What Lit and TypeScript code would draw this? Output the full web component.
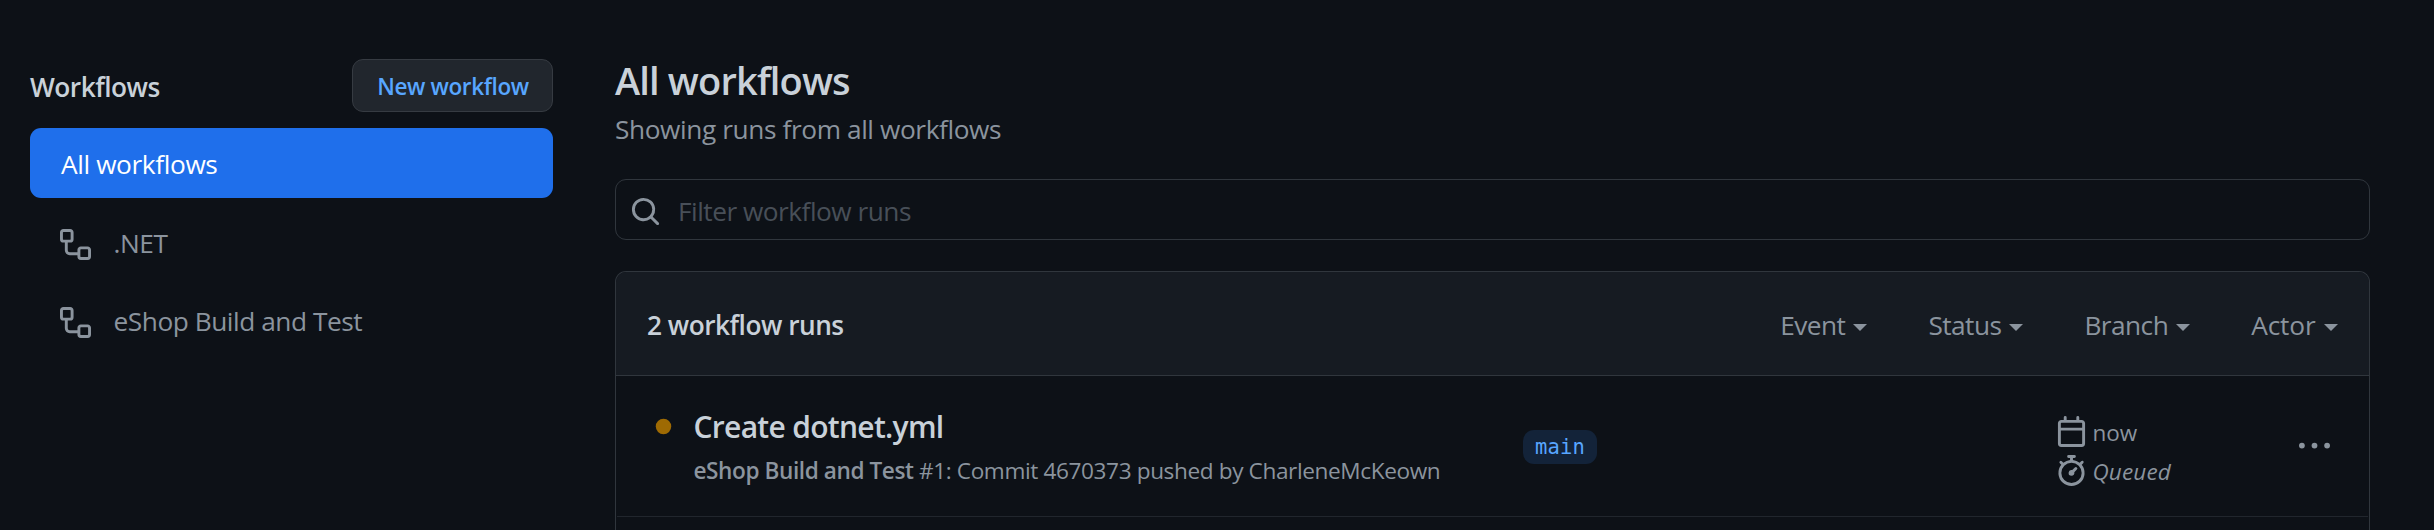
import { LitElement, html, css, svg } from "lit";
import { customElement, property } from "lit/decorators.js";

const icons: Record<string, string> = {
  workflow:
    "M0 1.75C0 .784.784 0 1.75 0h3.5C6.216 0 7 .784 7 1.75v3.5A1.75 1.75 0 0 1 5.25 7H4v4a1 1 0 0 0 1 1h4v-1.25C9 9.784 9.784 9 10.75 9h3.5c.966 0 1.75.784 1.75 1.75v3.5A1.75 1.75 0 0 1 14.25 16h-3.5A1.75 1.75 0 0 1 9 14.25v-.75H5A2.5 2.5 0 0 1 2.5 11V7h-.75A1.75 1.75 0 0 1 0 5.25Zm1.75-.25a.25.25 0 0 0-.25.25v3.5c0 .138.112.25.25.25h3.5a.25.25 0 0 0 .25-.25v-3.5a.25.25 0 0 0-.25-.25Zm9 9a.25.25 0 0 0-.25.25v3.5c0 .138.112.25.25.25h3.5a.25.25 0 0 0 .25-.25v-3.5a.25.25 0 0 0-.25-.25Z",
  search:
    "M10.68 11.74a6 6 0 0 1-7.922-8.982 6 6 0 0 1 8.982 7.922l3.04 3.04a.749.749 0 0 1-.326 1.275.749.749 0 0 1-.734-.215ZM11.5 7a4.499 4.499 0 1 0-8.997 0A4.499 4.499 0 0 0 11.5 7Z",
  calendar:
    "M4.75 0a.75.75 0 0 1 .75.75V2h5V.75a.75.75 0 0 1 1.5 0V2h1.25c.966 0 1.75.784 1.75 1.75v10.5A1.75 1.75 0 0 1 13.25 16H2.75A1.75 1.75 0 0 1 1 14.25V3.75C1 2.784 1.784 2 2.75 2H4V.75A.75.75 0 0 1 4.75 0ZM2.5 7.5v6.75c0 .138.112.25.25.25h10.5a.25.25 0 0 0 .25-.25V7.5Zm10.75-4H2.75a.25.25 0 0 0-.25.25V6h11V3.75a.25.25 0 0 0-.25-.25Z",
  stopwatch:
    "M5.75.75A.75.75 0 0 1 6.5 0h3a.75.75 0 0 1 0 1.5h-.75v1l-.001.041a6.724 6.724 0 0 1 3.464 1.435l.007-.006.75-.75a.749.749 0 0 1 1.275.326.749.749 0 0 1-.215.734l-.75.75-.006.007a6.75 6.75 0 1 1-10.548 0L2.72 5.03l-.75-.75a.751.751 0 0 1 .018-1.042.751.751 0 0 1 1.042-.018l.75.75.007.006A6.72 6.72 0 0 1 7.25 2.541V1.5H6.5a.75.75 0 0 1-.75-.75ZM8 14.5a5.25 5.25 0 1 0-.001-10.501A5.25 5.25 0 0 0 8 14.5Zm.389-6.7 1.33-1.33a.75.75 0 1 1 1.061 1.06L9.45 8.861A1.503 1.503 0 0 1 8 10.75a1.499 1.499 0 1 1 .389-2.95Z",
  kebab:
    "M8 9a1.5 1.5 0 1 0 0-3 1.5 1.5 0 0 0 0 3ZM1.5 9a1.5 1.5 0 1 0 0-3 1.5 1.5 0 0 0 0 3Zm13 0a1.5 1.5 0 1 0 0-3 1.5 1.5 0 0 0 0 3Z",
  dot: "M8 4a4 4 0 1 1 0 8 4 4 0 0 1 0-8Z",
};

@customElement("octo-icon")
export class OctoIcon extends LitElement {
  @property() name = "";
  static styles = css`
    :host { display: block; flex: none; width: 31px; height: 31px; }
    svg { display: block; width: 100%; height: 100%; fill: currentColor; overflow: visible; }
  `;
  render() {
    return html`<svg viewBox="0 0 16 16" aria-hidden="true">${svg`<path d=${icons[this.name] ?? ""}></path>`}</svg>`;
  }
}

@customElement("workflow-sidebar")
export class WorkflowSidebar extends LitElement {
  static styles = css`
    :host { display: block; }
    .head { display: flex; justify-content: space-between; align-items: center; height: 53px; margin-bottom: 16px; }
    h2 { margin: 3px 0 0; font-size: 26.25px; line-height: 40px; font-weight: 600; letter-spacing: -0.5px; color: #c9d1d9; }
    button { box-sizing: border-box; width: 201px; height: 53px; padding: 3px 0 0 1px; border: 1px solid #363b42; border-radius: 11px;
      background: #21262d; color: #58a6ff; font: 600 22.5px/34px "Open Sans", sans-serif; letter-spacing: -0.36px; }
    nav { display: flex; flex-direction: column; gap: 8px; }
    .item { display: flex; align-items: center; height: 70px; padding-left: 30px; border-radius: 11px; color: #8b949e; letter-spacing: -0.45px; }
    .item span { margin-top: 4px; }
    .item octo-icon { margin: 7px 22.5px 0 0; }
    .item.active { padding-left: 31px; background: #1f6feb; color: #fff; letter-spacing: -0.38px; }
    .item.active span { margin-top: 2px; }
  `;
  render() {
    return html`
      <div class="head"><h2>Workflows</h2><button>New workflow</button></div>
      <nav>
        <div class="item active"><span>All workflows</span></div>
        ${[".NET", "eShop Build and Test"].map(
          (name) => html`<div class="item"><octo-icon name="workflow"></octo-icon><span>${name}</span></div>`,
        )}
      </nav>
    `;
  }
}

@customElement("run-row")
export class RunRow extends LitElement {
  static styles = css`
    :host { display: grid; grid-template-columns: 31px 844.5px 533px 243px 31px; height: 140px; margin: 0 1px;
      padding-left: 30.5px; border-bottom: 1px solid #21262d; }
    .state { margin-top: 35px; color: #9e6a03; }
    .info { padding: 31px 0 0 15px; }
    .title { font-size: 30px; line-height: 40px; font-weight: 600; letter-spacing: -0.7px; color: #c9d1d9; }
    .sub { margin-top: 6px; font-size: 22.6px; line-height: 36px; letter-spacing: -0.38px; white-space: nowrap; }
    .sub b { font-weight: 600; letter-spacing: -0.42px; }
    .branch { justify-self: start; height: 33px; margin-top: 54px; padding: 1px 12px 0; border-radius: 11px; background: #132339;
      color: #58a6ff; font: 20.5px/33px "DejaVu Sans Mono", monospace; letter-spacing: 0.15px; }
    .meta { padding-top: 36px; font-size: 22.5px; letter-spacing: -0.1px; }
    .meta div { display: flex; align-items: center; gap: 5.5px; height: 39px; }
    .meta span, .meta i { margin-top: 2px; }
    .meta i { letter-spacing: 0.15px; }
    .more { margin-top: 55px; }
  `;
  render() {
    return html`
      <octo-icon class="state" name="dot"></octo-icon>
      <div class="info">
        <div class="title">Create dotnet.yml</div>
        <div class="sub"><b>eShop Build and Test</b> #1: Commit 4670373 pushed by CharleneMcKeown</div>
      </div>
      <span class="branch">main</span>
      <div class="meta">
        <div><octo-icon name="calendar"></octo-icon><span>now</span></div>
        <div><octo-icon name="stopwatch"></octo-icon><i>Queued</i></div>
      </div>
      <octo-icon class="more" name="kebab"></octo-icon>
    `;
  }
}

@customElement("app-root")
export class AppRoot extends LitElement {
  static styles = css`
    :host { display: grid; grid-template-columns: 523px 1755px; column-gap: 62px; box-sizing: border-box; height: 530px;
      padding-left: 30px; overflow: hidden; background: #0d1117; color: #8b949e;
      font: 26.25px/40px "Open Sans", sans-serif; }
    workflow-sidebar { padding-top: 59px; }
    main { display: flex; flex-direction: column; padding-top: 52px; min-height: 0; }
    h1 { margin: 0 0 1px; font-size: 38px; line-height: 56px; font-weight: 600; letter-spacing: -0.83px; color: #c9d1d9; }
    .lead { letter-spacing: -0.4px; }
    .search { display: flex; align-items: center; box-sizing: border-box; height: 61px; margin: 30px 0 31px; padding-left: 14px;
      border: 1px solid #30363d; border-radius: 11px; }
    .search span { margin: 3px 0 0 17px; color: #484f58; letter-spacing: -0.5px; }
    .search octo-icon { margin-top: 3px; }
    .runs { flex: 1; border: 1px solid #30363d; border-bottom: 0; border-radius: 11px 11px 0 0; }
    .bar { display: flex; align-items: center; height: 103px; padding: 0 31px; border-bottom: 1px solid #30363d;
      border-radius: 10px 10px 0 0; background: #161b22; }
    .bar > * { margin-top: 2px; }
    .bar strong { flex: 1; font-weight: 600; color: #c9d1d9; letter-spacing: -0.5px; }
    .filters { display: flex; gap: 61px; letter-spacing: -0.55px; }
    .filter { display: flex; align-items: center; gap: 8px; }
    .filter:last-child { letter-spacing: -0.15px; gap: 8.5px; }
    .caret { width: 0; height: 0; margin-top: 6px; border: 7.5px solid transparent; border-top-color: currentColor; border-bottom: 0; }
  `;
  render() {
    return html`
      <workflow-sidebar></workflow-sidebar>
      <main>
        <h1>All workflows</h1>
        <div class="lead">Showing runs from all workflows</div>
        <div class="search"><octo-icon name="search"></octo-icon><span>Filter workflow runs</span></div>
        <section class="runs">
          <div class="bar">
            <strong>2 workflow runs</strong>
            <div class="filters">
              ${["Event", "Status", "Branch", "Actor"].map(
                (f) => html`<div class="filter">${f}<span class="caret"></span></div>`,
              )}
            </div>
          </div>
          <run-row></run-row>
        </section>
      </main>
    `;
  }
}
